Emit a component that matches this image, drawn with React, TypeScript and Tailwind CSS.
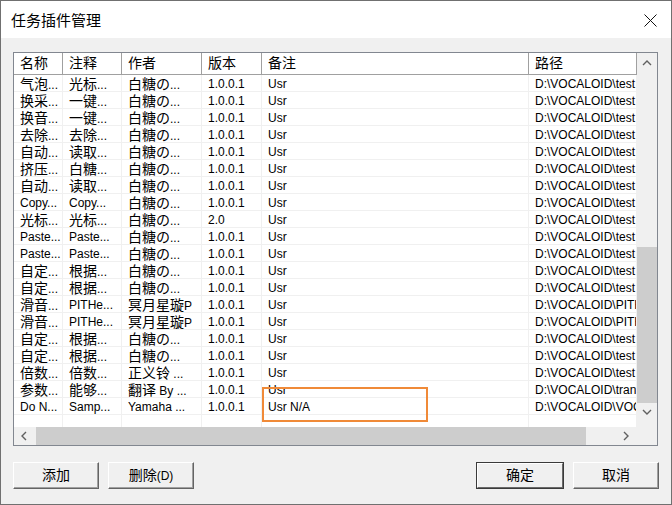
import React from "react";

const cjk = /([\u2e80-\u9fff\uff00-\uffef]+)/;

// CJK runs are drawn a bit larger than latin, like the dialog font does
const Txt = ({ s }: { s: string }) => (
  <>
    {s.split(cjk).map((p, i) =>
      cjk.test(p) ? (
        <span key={i} className="text-[14px]">
          {p}
        </span>
      ) : (
        <React.Fragment key={i}>{p}</React.Fragment>
      )
    )}
  </>
);

const widths = ["w-[49px]", "w-[59px]", "w-[80px]", "w-[60px]", "w-[267px]", "w-[108px]"];
const heads = ["名称", "注释", "作者", "版本", "备注", "路径"];

const T = "D:\\VOCALOID\\test";
const rows: string[][] = [
  ["气泡...", "光标...", "白糖の...", "1.0.0.1", "Usr", T],
  ["换采...", "一键...", "白糖の...", "1.0.0.1", "Usr", T],
  ["换音...", "一键...", "白糖の...", "1.0.0.1", "Usr", T],
  ["去除...", "去除...", "白糖の...", "1.0.0.1", "Usr", T],
  ["自动...", "读取...", "白糖の...", "1.0.0.1", "Usr", T],
  ["挤压...", "白糖...", "白糖の...", "1.0.0.1", "Usr", T],
  ["自动...", "读取...", "白糖の...", "1.0.0.1", "Usr", T],
  ["Copy...", "Copy...", "白糖の...", "1.0.0.1", "Usr", T],
  ["光标...", "光标...", "白糖の...", "2.0", "Usr", T],
  ["Paste...", "Paste...", "白糖の...", "1.0.0.1", "Usr", T],
  ["Paste...", "Paste...", "白糖の...", "1.0.0.1", "Usr", T],
  ["自定...", "根据...", "白糖の...", "1.0.0.1", "Usr", T],
  ["自定...", "根据...", "白糖の...", "1.0.0.1", "Usr", T],
  ["滑音...", "PITHe...", "冥月星璇P", "1.0.0.1", "Usr", "D:\\VOCALOID\\PITHelper"],
  ["滑音...", "PITHe...", "冥月星璇P", "1.0.0.1", "Usr", "D:\\VOCALOID\\PITHelper"],
  ["自定...", "根据...", "白糖の...", "1.0.0.1", "Usr", T],
  ["自定...", "根据...", "白糖の...", "1.0.0.1", "Usr", T],
  ["倍数...", "倍数...", "正义铃 ...", "1.0.0.1", "Usr", T],
  ["参数...", "能够...", "翻译 By ...", "1.0.0.1", "Usr", "D:\\VOCALOID\\translate"],
  ["Do N...", "Samp...", "Yamaha ...", "1.0.0.1", "Usr N/A", "D:\\VOCALOID\\VOCALOID"],
];

const Chevron = ({ dir }: { dir: "up" | "down" | "left" | "right" }) => {
  const pts = {
    up: "1,6 5,2 9,6",
    down: "1,2 5,6 9,2",
    left: "6,1 2,5 6,9",
    right: "3,1 7,5 3,9",
  }[dir];
  return (
    <svg width="10" height="10" viewBox="0 0 10 10">
      <polyline points={pts} fill="none" stroke="#606060" strokeWidth="1.4" />
    </svg>
  );
};

const Btn = ({ label, def }: { label: string; def?: boolean }) =>
  def ? (
    <div className="w-[88px] h-[27px] border border-[#3a3a3a]">
      <button className="w-full h-full bg-[#f0f0f0] border border-t-white border-l-white border-r-[#696969] border-b-[#696969] text-[12px] text-black">
        <Txt s={label} />
      </button>
    </div>
  ) : (
    <button className="w-[86px] h-[27px] bg-[#f0f0f0] border border-t-white border-l-white border-r-[#646464] border-b-[#646464] shadow-[inset_-1px_-1px_0_#a0a0a0] text-[12px] text-black">
      <Txt s={label} />
    </button>
  );

export default function App() {
  return (
    <div className="w-[672px] h-[505px] border border-[#707070] bg-[#f0f0f0] flex flex-col font-['Liberation_Sans','Noto_Sans_CJK_SC',sans-serif] text-black">
      <div className="h-[37px] bg-white flex items-center justify-between pl-[10px] pr-[14px] pt-[1px]">
        <span className="text-[15px] font-['Noto_Sans_CJK_SC',sans-serif]">任务插件管理</span>
        <svg width="13" height="13" viewBox="0 0 13 13">
          <path d="M0.5 0.5 L12.5 12.5 M12.5 0.5 L0.5 12.5" stroke="#111" strokeWidth="1" />
        </svg>
      </div>

      <div className="flex-1 flex flex-col px-[12px] pt-[14px]">
        <div className="relative w-[645px] h-[394px] border border-[#828790] bg-white flex flex-col">
          <div className="flex flex-1 min-h-0">
            <div className="w-[623px] overflow-hidden flex flex-col">
              <div className="flex h-[22px] border-b border-[#a0a0a0] shrink-0">
                {heads.map((h, i) => (
                  <div
                    key={i}
                    className={`${widths[i]} shrink-0 h-full border-r border-[#a0a0a0] shadow-[inset_1px_0_0_#ffffff] pl-[6px] leading-[21px] text-[14px]`}
                  >
                    {h}
                  </div>
                ))}
              </div>
              {rows.map((r, ri) => (
                <div key={ri} className="flex h-[17px] shrink-0 border-b border-[#f0f0f0]">
                  {r.map((c, ci) => (
                    <div
                      key={ci}
                      className={`${widths[ci]} shrink-0 h-full border-r border-[#f0f0f0] pl-[6px] leading-[19px] text-[12px] whitespace-nowrap ${
                        ci === 5 ? "overflow-hidden" : ""
                      }`}
                    >
                      <Txt s={c} />
                    </div>
                  ))}
                </div>
              ))}
              <div className="flex flex-1">
                {widths.map((w, i) => (
                  <div key={i} className={`${w} shrink-0 h-full border-r border-[#f0f0f0]`} />
                ))}
              </div>
            </div>
            <div className="w-[20px] bg-[#f0f0f0] flex flex-col">
              <div className="h-[22px] flex items-center justify-center">
                <Chevron dir="up" />
              </div>
              <div className="h-[172px]" />
              <div className="h-[156px] bg-[#cdcdcd]" />
              <div className="h-[20px] flex items-center justify-center">
                <Chevron dir="down" />
              </div>
              <div className="flex-1" />
            </div>
          </div>
          <div className="flex h-[18px] shrink-0">
            <div className="w-[623px] flex bg-[#f0f0f0]">
              <div className="w-[22px] flex items-center justify-center">
                <Chevron dir="left" />
              </div>
              <div className="w-[550px] bg-[#cdcdcd]" />
              <div className="flex-1" />
              <div className="w-[22px] flex items-center justify-center">
                <Chevron dir="right" />
              </div>
            </div>
            <div className="w-[20px] bg-[#f0f0f0]" />
          </div>

          <div className="absolute left-[248px] top-[334px] w-[166px] h-[35px] border-2 border-[#f08a38]" />
        </div>

        <div className="flex items-center mt-[16px] gap-[9px]">
          <Btn label="添加" />
          <Btn label="删除(D)" />
          <div className="ml-auto flex gap-[9px]">
            <Btn label="确定" def />
            <Btn label="取消" />
          </div>
        </div>
      </div>
    </div>
  );
}
